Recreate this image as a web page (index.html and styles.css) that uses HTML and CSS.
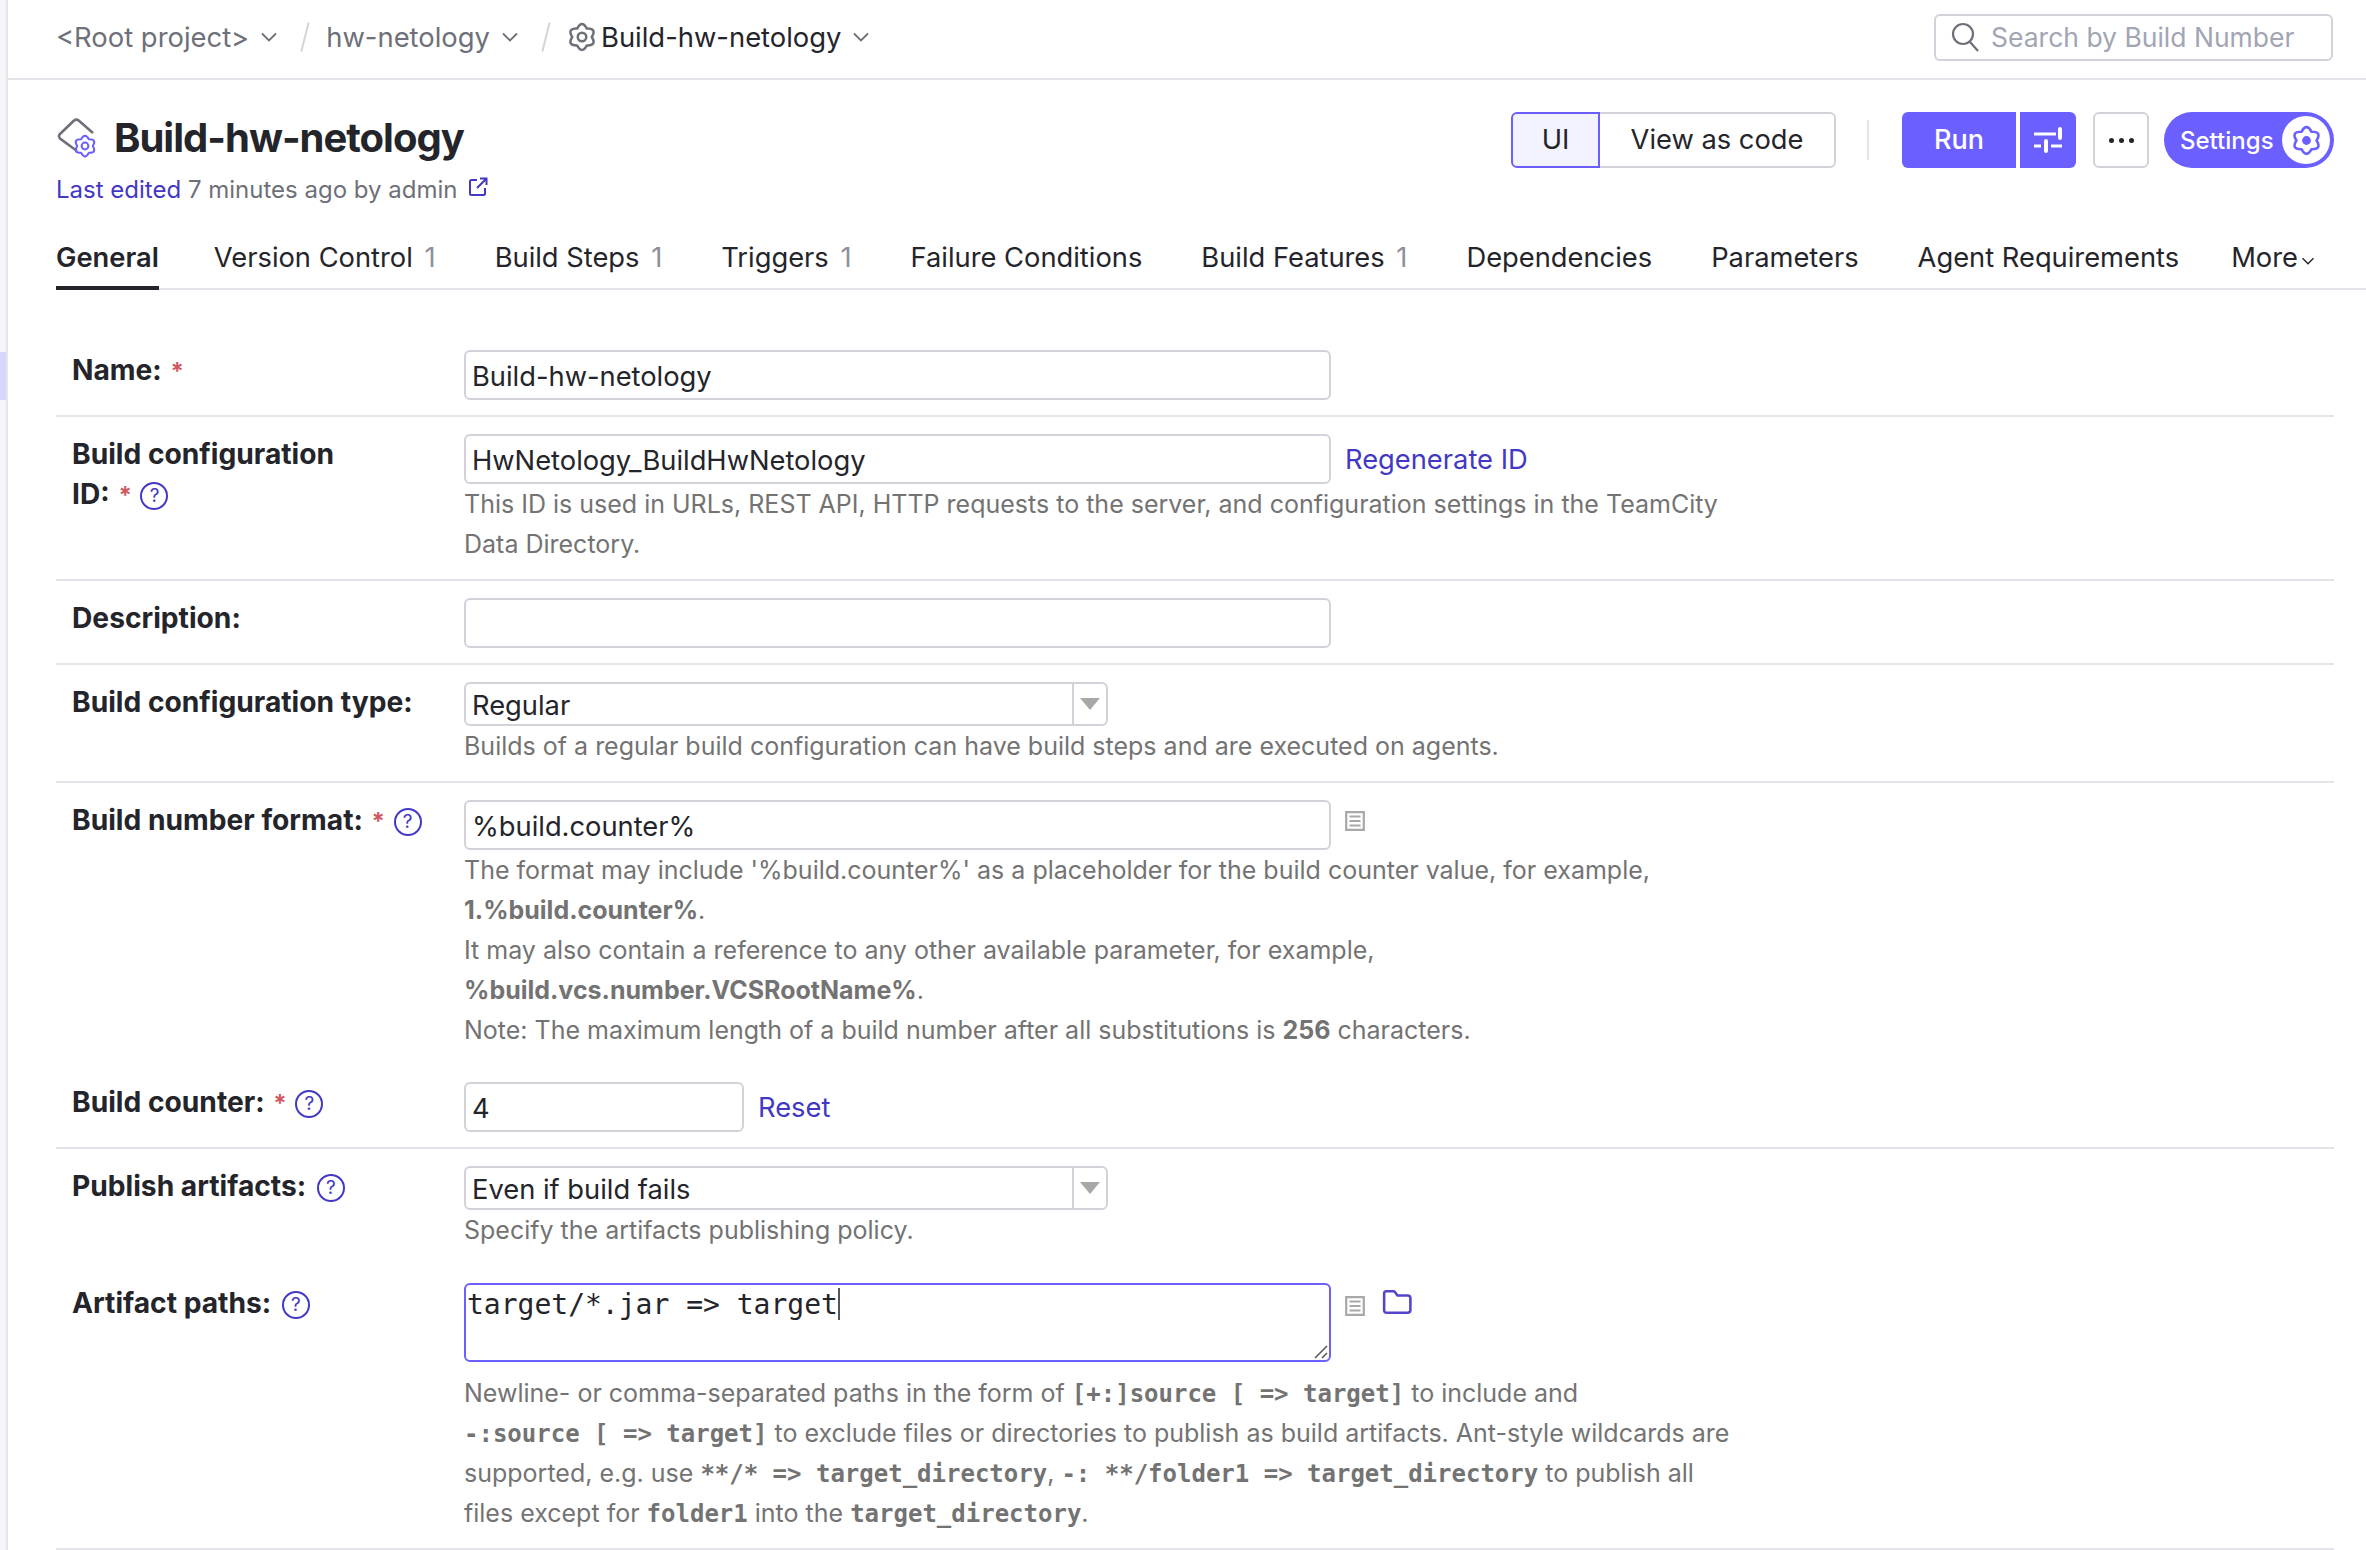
FILE: index.html
```html
<!DOCTYPE html>
<html lang="en">
<head>
    <meta charset="UTF-8">
    <title>Build-hw-netology</title>
    <link rel="stylesheet" href="styles.css">
</head>
<body>
    <svg class="defs" width="0" height="0">
        <symbol id="gear" viewBox="0 0 24 24">
            <path d="M15.900 5.250Q12 -2 8.100 5.250Q-0.120 5 4.200 12Q-0.120 19 8.100 18.750Q12 26 15.900 18.750Q24.120 19 19.800 12Q24.120 5 15.900 5.250Z" fill="none" stroke="currentColor" stroke-width="2" stroke-linejoin="round"/>
            <circle cx="12" cy="12" r="3.400" fill="none" stroke="currentColor" stroke-width="2"/>
        </symbol>
        <symbol id="gear-dot" viewBox="0 0 24 24">
            <path d="M15.900 5.250Q12 -2 8.100 5.250Q-0.120 5 4.200 12Q-0.120 19 8.100 18.750Q12 26 15.900 18.750Q24.120 19 19.800 12Q24.120 5 15.900 5.250Z" fill="none" stroke="currentColor" stroke-width="2" stroke-linejoin="round"/>
            <circle cx="12" cy="12" r="3.400" fill="currentColor"/>
        </symbol>
        <symbol id="chevron" viewBox="0 0 18 18">
            <path d="M2 5.500 9 12.500 16 5.500" fill="none" stroke="currentColor" stroke-width="1.800"/>
        </symbol>
        <symbol id="copy" viewBox="0 0 20 20">
            <path d="M1.200 1.200H18.800V18.800H1.200ZM4.500 5.500H15.500M4.500 10H15.500M4.500 14.500H15.500" fill="none" stroke="currentColor" stroke-width="2.200"/>
        </symbol>
    </svg>
    <div class="page">
        <div class="rail"><div class="rail-mark"></div></div>
        <div class="main">
            <div class="topbar">
                <div class="crumbs">
                    <span class="crumb">&lt;Root project&gt;</span>
                    <svg class="chev"><use href="#chevron"/></svg>
                    <span class="slash"></span>
                    <span class="crumb">hw-netology</span>
                    <svg class="chev"><use href="#chevron"/></svg>
                    <span class="slash"></span>
                    <svg class="crumb-gear"><use href="#gear"/></svg>
                    <span class="crumb current">Build-hw-netology</span>
                    <svg class="chev"><use href="#chevron"/></svg>
                </div>
                <div class="search">
                    <svg class="search-icon" viewBox="0 0 28 30"><circle cx="12" cy="12" r="10" fill="none" stroke="currentColor" stroke-width="2.200"/><path d="M19 20 27 29" fill="none" stroke="currentColor" stroke-width="2.200"/></svg>
                    <span>Search by Build Number</span>
                </div>
            </div>

            <div class="head">
                <div class="head-left">
                    <div class="title-row">
                        <svg class="title-icon" viewBox="0 0 41 41">
                            <path d="M36 15 22 2.800Q19 0.500 16.500 3L3 16Q1 18 3 20.500L20 33" fill="none" stroke="#6e7079" stroke-width="2.600"/>
                            <use href="#gear" x="16" y="16" width="24" height="24" class="title-gear"/>
                        </svg>
                        <h1>Build-hw-netology</h1>
                    </div>
                    <div class="edited">
                        <a class="link-soft" href="#">Last edited</a> 7 minutes ago by admin
                        <svg class="ext" viewBox="0 0 20 20"><path d="M9 3H3.500Q2 3 2 4.500V16.500Q2 18 3.500 18H15.500Q17 18 17 16.500V11M9 11 18 2M12 1.500H18.500V8" fill="none" stroke="currentColor" stroke-width="2"/></svg>
                    </div>
                </div>
                <div class="actions">
                    <div class="toggle">
                        <span class="toggle-on">UI</span>
                        <span class="toggle-off">View as code</span>
                    </div>
                    <span class="vsep"></span>
                    <div class="run-group">
                        <span class="run">Run</span>
                        <span class="run-opts">
                            <svg viewBox="0 0 30 30" width="30" height="30"><path d="M1 9H23M1 21H8M18 21H29" fill="none" stroke="#fff" stroke-width="3"/><path d="M27 4V13M13 16V26" fill="none" stroke="#fff" stroke-width="4" stroke-linecap="round"/></svg>
                        </span>
                    </div>
                    <span class="more-btn"><i></i><i></i><i></i></span>
                    <div class="settings">
                        <span>Settings</span>
                        <span class="settings-knob"><svg><use href="#gear-dot"/></svg></span>
                    </div>
                </div>
            </div>

            <nav class="tabs">
                <a class="tab active">General</a>
                <a class="tab">Version Control <em>1</em></a>
                <a class="tab">Build Steps <em>1</em></a>
                <a class="tab">Triggers <em>1</em></a>
                <a class="tab">Failure Conditions</a>
                <a class="tab">Build Features <em>1</em></a>
                <a class="tab">Dependencies</a>
                <a class="tab">Parameters</a>
                <a class="tab">Agent Requirements</a>
                <a class="tab tab-more">More<svg class="chev-small"><use href="#chevron"/></svg></a>
            </nav>

            <form class="form">
                <div class="row">
                    <label class="label">Name: <span class="req">*</span></label>
                    <div class="field">
                        <input class="input" type="text" value="Build-hw-netology">
                    </div>
                </div>

                <div class="row">
                    <label class="label"><span class="label-line">Build configuration</span><span>ID:</span> <span class="req">*</span> <span class="help-dot">?</span></label>
                    <div class="field">
                        <div class="inline">
                            <input class="input" type="text" value="HwNetology_BuildHwNetology">
                            <a class="link" href="#">Regenerate ID</a>
                        </div>
                        <p class="note">This ID is used in URLs, REST API, HTTP requests to the server, and configuration settings in the TeamCity<br>Data Directory.</p>
                    </div>
                </div>

                <div class="row">
                    <label class="label">Description:</label>
                    <div class="field">
                        <input class="input" type="text">
                    </div>
                </div>

                <div class="row">
                    <label class="label">Build configuration type:</label>
                    <div class="field">
                        <div class="select"><span class="select-text">Regular</span><span class="select-arrow"></span></div>
                        <p class="note">Builds of a regular build configuration can have build steps and are executed on agents.</p>
                    </div>
                </div>

                <div class="row row-open">
                    <label class="label">Build number format: <span class="req">*</span> <span class="help-dot">?</span></label>
                    <div class="field">
                        <div class="inline">
                            <input class="input" type="text" value="%build.counter%">
                            <svg class="copy"><use href="#copy"/></svg>
                        </div>
                        <p class="note">The format may include '%build.counter%' as a placeholder for the build counter value, for example,<br><b>1.%build.counter%</b>.<br>It may also contain a reference to any other available parameter, for example,<br><b>%build.vcs.number.VCSRootName%</b>.<br>Note: The maximum length of a build number after all substitutions is <b>256</b> characters.</p>
                    </div>
                </div>

                <div class="row row-counter">
                    <label class="label">Build counter: <span class="req">*</span> <span class="help-dot">?</span></label>
                    <div class="field">
                        <div class="inline">
                            <input class="input input-short" type="text" value="4">
                            <a class="link" href="#">Reset</a>
                        </div>
                    </div>
                </div>

                <div class="row row-open">
                    <label class="label">Publish artifacts: <span class="help-dot">?</span></label>
                    <div class="field">
                        <div class="select"><span class="select-text">Even if build fails</span><span class="select-arrow"></span></div>
                        <p class="note">Specify the artifacts publishing policy.</p>
                    </div>
                </div>

                <div class="row">
                    <label class="label">Artifact paths: <span class="help-dot">?</span></label>
                    <div class="field">
                        <div class="inline inline-top">
                            <div class="textarea">target/*.jar =&gt; target<span class="caret"></span>
                                <svg class="grip" viewBox="0 0 14 14"><path d="M1 13 13 1M8 13 13 8" fill="none" stroke="#555" stroke-width="1.500"/></svg>
                            </div>
                            <svg class="copy"><use href="#copy"/></svg>
                            <svg class="folder" viewBox="0 0 28 24"><path d="M2 4Q2 2 4 2H10.500Q11.500 2 12 2.600L14.500 6H24Q26.500 6 26.500 8.500V19.500Q26.500 22 24 22H4.500Q2 22 2 19.500Z" fill="none" stroke="currentColor" stroke-width="2.400"/></svg>
                        </div>
                        <p class="note note-gap">Newline- or comma-separated paths in the form of <code>[+:]source [ =&gt; target]</code> to include and<br><code>-:source [ =&gt; target]</code> to exclude files or directories to publish as build artifacts. Ant-style wildcards are<br>supported, e.g. use <code>**/* =&gt; target_directory</code>, <code>-: **/folder1 =&gt; target_directory</code> to publish all<br>files except for <code>folder1</code> into the <code>target_directory</code>.</p>
                    </div>
                </div>
            </form>
        </div>
    </div>
</body>
</html>
```

FILE: styles.css
```css
:root {
    --primary: #6b5fff;
    --link: #4238c4;
    --line: #e4e4ea;
    --border: #d2d2da;
    --text: #24252b;
    --muted: #6e7079;
    --note: #737373;
}
* {
    box-sizing: border-box;
}
html, body {
    margin: 0;
    height: 1550px;
    overflow: hidden;
}
body {
    font-family: Inter, 'Noto Sans', sans-serif;
    font-size: 26px;
    color: var(--text);
    background-color: #fff;
}
.defs {
    position: absolute;
}
.page {
    display: flex;
    height: 1550px;
}
.rail {
    width: 8px;
    flex: none;
    background-color: #f5f5fa;
    border-right: 2px solid #e6e6ee;
    padding-top: 352px;
}
.rail-mark {
    height: 48px;
    background-color: #d9d6fb;
}
.main {
    flex: 1;
    min-width: 0;
    padding-right: 32px;
}

/* top bar */
.topbar {
    display: flex;
    justify-content: space-between;
    align-items: center;
    height: 80px;
    margin-right: -32px;
    padding: 0 33px 4px 48px;
    border-bottom: 2px solid var(--line);
}
.crumbs {
    display: flex;
    align-items: center;
    height: 46px;
}
.crumb {
    color: var(--muted);
    font-size: 27.4px;
}
.crumb.current {
    color: var(--text);
}
.chev {
    width: 18px;
    height: 18px;
    margin-left: 11px;
    color: var(--muted);
}
.slash {
    width: 2px;
    height: 30px;
    margin: 0 20px 0 26px;
    background-color: #d4d4da;
    transform: rotate(14deg);
}
.crumb-gear {
    width: 30px;
    height: 32px;
    margin-right: 4px;
    color: var(--muted);
}
.search {
    display: flex;
    align-items: center;
    gap: 12px;
    width: 399px;
    height: 47px;
    padding-left: 15px;
    border: 2px solid var(--border);
    border-radius: 6px;
    font-size: 26.5px;
    color: #a2a5b3;
}
.search-icon {
    width: 28px;
    height: 30px;
    color: var(--muted);
}

/* header */
.head {
    display: flex;
    justify-content: space-between;
    padding-left: 48px;
}
.title-row {
    display: flex;
    align-items: center;
    gap: 16px;
    height: 48px;
    margin-top: 34px;
}
.title-icon {
    flex: none;
    width: 41px;
    height: 41px;
    margin-left: 1px;
    color: var(--primary);
}
h1 {
    margin: 0;
    font-size: 40px;
    font-weight: 700;
    letter-spacing: -1px;
    line-height: 48px;
}
.edited {
    margin-top: 13px;
    font-size: 24px;
    line-height: 30px;
    color: var(--muted);
}
.link-soft {
    color: var(--link);
    text-decoration: none;
}
.ext {
    width: 20px;
    height: 20px;
    margin-left: 4px;
    color: var(--link);
    vertical-align: 1px;
}
.actions {
    display: flex;
    align-items: center;
    height: 56px;
    margin-top: 32px;
}
.toggle {
    display: flex;
    width: 325px;
    height: 56px;
    text-align: center;
    line-height: 52px;
    font-size: 27.3px;
}
.toggle-on {
    width: 89px;
    border: 2px solid var(--primary);
    border-radius: 6px 0 0 6px;
    background-color: #f3f3ff;
}
.toggle-off {
    flex: 1;
    border: 2px solid var(--border);
    border-left: none;
    border-radius: 0 6px 6px 0;
}
.vsep {
    width: 2px;
    height: 40px;
    margin: 0 33px 0 31px;
    background-color: var(--line);
}
.run-group {
    display: flex;
    gap: 4px;
    height: 56px;
    color: #fff;
    font-size: 27px;
    font-weight: 500;
}
.run {
    width: 114px;
    background-color: var(--primary);
    border-radius: 6px 0 0 6px;
    text-align: center;
    line-height: 56px;
}
.run-opts {
    display: flex;
    align-items: center;
    justify-content: center;
    width: 56px;
    background-color: var(--primary);
    border-radius: 0 6px 6px 0;
}
.more-btn {
    display: flex;
    align-items: center;
    justify-content: center;
    gap: 5px;
    width: 56px;
    height: 56px;
    margin-left: 17px;
    border: 2px solid var(--border);
    border-radius: 6px;
}
.more-btn i {
    width: 5px;
    height: 5px;
    border-radius: 50%;
    background-color: var(--text);
}
.settings {
    display: flex;
    align-items: center;
    justify-content: space-between;
    width: 170px;
    height: 56px;
    margin-left: 15px;
    padding: 0 4px 0 16px;
    border-radius: 28px;
    background-color: var(--primary);
    color: #fff;
    font-size: 24px;
    font-weight: 500;
}
.settings-knob {
    display: flex;
    align-items: center;
    justify-content: center;
    width: 48px;
    height: 48px;
    border-radius: 50%;
    background-color: #fff;
    color: var(--primary);
}
.settings-knob svg {
    width: 31px;
    height: 31px;
}

/* tabs */
.tabs {
    display: flex;
    gap: 59px;
    height: 54px;
    margin: 31px -32px 0 48px;
    padding: 2px 32px 0 0;
    border-bottom: 2px solid var(--line);
}
.tab {
    height: 52px;
    line-height: 40px;
    font-size: 27.3px;
    white-space: nowrap;
}
.tab em {
    margin-left: 4px;
    font-style: normal;
    color: #8d909b;
}
.tab.active {
    margin-right: -4px;
    font-weight: 600;
    border-bottom: 4px solid var(--text);
}
.tab-more {
    margin-left: -7px;
}
.chev-small {
    width: 14px;
    height: 14px;
    margin-left: 3px;
    vertical-align: -1px;
}

/* form rows */
.form {
    margin: 43px 0 0 48px;
}
.row {
    display: grid;
    grid-template-columns: 408px 1fr;
    padding: 17px 0 15px;
    border-bottom: 2px solid var(--line);
}
.row-open {
    border-bottom: none;
    padding-bottom: 16px;
}
.row-counter {
    padding-top: 16px;
}
.label {
    padding-left: 16px;
    font-size: 28.2px;
    font-weight: 700;
    line-height: 40px;
}
.label-line {
    display: block;
}
.req {
    color: #cf5a62;
    font-size: 24px;
    margin: 0 2px;
}
.help-dot {
    display: inline-block;
    width: 28px;
    height: 28px;
    margin-left: 4px;
    border: 2px solid var(--link);
    border-radius: 50%;
    color: var(--link);
    font-size: 19px;
    font-weight: 400;
    line-height: 24px;
    text-align: center;
    vertical-align: 2px;
}
.req + .help-dot {
    margin-left: 0;
}
.field {
    min-width: 0;
}
.inline {
    display: flex;
    align-items: center;
    gap: 14px;
}
.inline-top {
    align-items: flex-start;
}
.input {
    display: block;
    width: 867px;
    height: 50px;
    padding: 2px 6px 0;
    border: 2px solid var(--border);
    border-radius: 6px;
    background-color: #fff;
    font-family: inherit;
    font-size: 27.3px;
    color: var(--text);
    outline: none;
}
.input-short {
    width: 280px;
}
.link {
    color: var(--link);
    font-size: 27.3px;
    text-decoration: none;
}
.note {
    margin: 0;
    font-size: 25px;
    line-height: 40px;
    color: var(--note);
}
.note b {
    font-weight: 700;
}
.note-gap {
    margin-top: 11px;
}
.note code {
    font-family: 'DejaVu Sans Mono', monospace;
    font-size: 24px;
    font-weight: 700;
    line-height: 1;
}
.select {
    display: flex;
    width: 644px;
    height: 44px;
    border: 2px solid var(--border);
    border-radius: 6px;
    font-size: 27.3px;
    line-height: 44px;
}
.select-text {
    flex: 1;
    padding-left: 6px;
}
.select-arrow {
    display: flex;
    align-items: center;
    justify-content: center;
    width: 34px;
    border-left: 2px solid var(--border);
}
.select-arrow::after {
    content: '';
    border-style: solid;
    border-width: 12px 10px 0;
    border-color: #a8a8a8 transparent transparent;
}
.copy {
    width: 20px;
    height: 20px;
    margin-bottom: 8px;
    color: #a8a8a8;
}
.inline-top .copy {
    margin: 13px 0 0;
}
.folder {
    width: 30px;
    height: 26px;
    margin: 6px 0 0 3px;
    color: #5446cc;
}
.textarea {
    position: relative;
    width: 867px;
    height: 79px;
    padding: 2px 0 0 1px;
    border: 2px solid var(--primary);
    border-radius: 6px;
    font-family: 'DejaVu Sans Mono', monospace;
    font-size: 28px;
    line-height: 36px;
}
.caret {
    display: inline-block;
    width: 2px;
    height: 32px;
    background-color: #555;
    vertical-align: -6px;
}
.grip {
    position: absolute;
    right: 1px;
    bottom: 1px;
    width: 14px;
    height: 14px;
}
```
